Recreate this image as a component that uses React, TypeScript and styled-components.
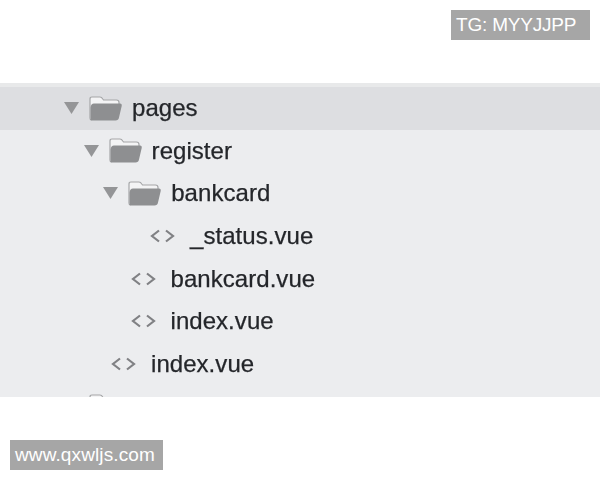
import React from "react";
import styled, { createGlobalStyle } from "styled-components";

const Global = createGlobalStyle`
  html, body { margin: 0; padding: 0; background: #fff; }
  body { font-family: "Liberation Sans", Arial, sans-serif; }
`;

const Page = styled.div`
  position: relative;
  width: 600px;
  height: 480px;
  overflow: hidden;
  background: #fff;
  padding-top: 83px;
  box-sizing: border-box;
`;

const Clip = styled.div`
  height: 313.5px;
  overflow: hidden;
`;

const Panel = styled.div`
  height: 340px;
  background: #ecedef;
  border-top: 4px solid #e8e9ea;
  box-sizing: border-box;
  filter: blur(0.45px);
`;

const Row = styled.div<{ $indent: number; $selected?: boolean }>`
  display: flex;
  align-items: center;
  height: 42.6px;
  padding-left: ${(p) => p.$indent}px;
  background: ${(p) => (p.$selected ? "#dddee1" : "transparent")};
  box-sizing: border-box;
`;

const Name = styled.span`
  font-size: 24px;
  line-height: 28px;
  letter-spacing: 0.05px;
  color: #24262a;
  -webkit-text-stroke: 0.25px #24262a;
  white-space: nowrap;
`;

const Twist = styled.svg`
  flex: none;
  width: 15px;
  height: 12px;
  margin-right: 10px;
`;

const Folder = styled.svg`
  flex: none;
  width: 33px;
  height: 25px;
  margin-right: 10px;
`;

const Code = styled.svg`
  flex: none;
  width: 25px;
  height: 14px;
  margin-right: 15px;
`;

const Tag = styled.div<{ $corner: "top" | "bottom" }>`
  position: absolute;
  ${(p) =>
    p.$corner === "top"
      ? "left: 451px; top: 10px; width: 139px; letter-spacing: -0.2px;"
      : "left: 10px; top: 440px; width: 153px; letter-spacing: 0.12px;"}
  height: 30px;
  padding-left: 5px;
  box-sizing: border-box;
  background: #a6a6a6;
  color: #fff;
  font-size: 19px;
  line-height: 30px;
  white-space: nowrap;
`;

const FolderRow = ({ depth, name, selected }: { depth: number; name: string; selected?: boolean }) => (
  <Row $indent={64 + depth * 19.6} $selected={selected}>
    <Twist viewBox="0 0 15 12">
      <path d="M0 0H15L7.5 12Z" fill="#949597" />
    </Twist>
    <Folder viewBox="0 0 33 25">
      <path
        d="M2.5 24C1.2 24 1 23 1 22V3C1 1.5 1.5 1 3 1H11C12.5 1 13 1.7 13.8 3L14.5 4H27.5C29.5 4 30 5 30 6.5V9"
        fill="#f4f4f5"
        stroke="#a5a6a8"
        strokeWidth="1.2"
      />
      <path
        d="M1.5 23V11.5C1.9 8.8 3 7.5 5 7.5H31C32.5 7.5 33 8.5 32.7 10L30 21.5C29.5 23.7 28.5 24.5 26.5 24.5H3C2 24.5 1.5 24 1.5 23Z"
        fill="#8e8f91"
      />
    </Folder>
    <Name>{name}</Name>
  </Row>
);

const FileRow = ({ depth, name }: { depth: number; name: string }) => (
  <Row $indent={91.5 + depth * 19.5}>
    <Code viewBox="0 0 25 14">
      <path d="M9 1.5L2 7L9 12.5M16 1.5L23 7L16 12.5" fill="none" stroke="#808184" strokeWidth="2.2" />
    </Code>
    <Name>{name}</Name>
  </Row>
);

export default function App() {
  return (
    <Page>
      <Global />
      <Clip>
        <Panel>
          <FolderRow depth={0} name="pages" selected />
          <FolderRow depth={1} name="register" />
          <FolderRow depth={2} name="bankcard" />
          <FileRow depth={3} name="_status.vue" />
          <FileRow depth={2} name="bankcard.vue" />
          <FileRow depth={2} name="index.vue" />
          <FileRow depth={1} name="index.vue" />
          <FolderRow depth={0} name="events" />
        </Panel>
      </Clip>
      <Tag $corner="top">TG: MYYJJPP</Tag>
      <Tag $corner="bottom">www.qxwljs.com</Tag>
    </Page>
  );
}
